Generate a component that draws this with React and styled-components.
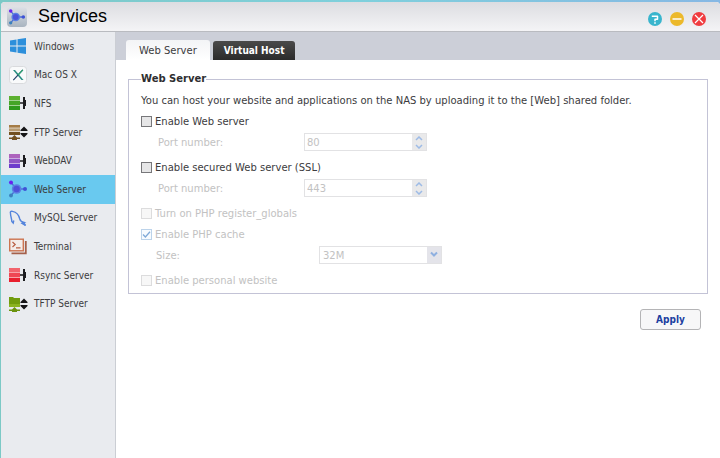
import React, { useState } from 'react'
import styled, { createGlobalStyle } from 'styled-components'

const colors = {
  text: '#3c3c3e',
  disabled: '#c2c2c2',
  border: '#c3c3d6',
  inputBorder: '#e2e2e4',
  sidebar: '#e9ebef',
  active: '#69c9ef',
  strip: '#cccfd8',
  action: '#1c3fa0',
}

const fonts = {
  main: "'DejaVu Sans', Verdana, sans-serif",
  narrow: "'DejaVu Sans Condensed', 'DejaVu Sans', Tahoma, sans-serif",
  title: "'Liberation Sans', Arial, sans-serif",
}

const GlobalStyle = createGlobalStyle`
  *, *::before, *::after {
    box-sizing: border-box;
  }
  body {
    margin: 0;
    background: #ffffff;
    color: ${colors.text};
    font-family: ${fonts.main};
    font-size: 10px;
  }
  button, input, select {
    font: inherit;
    color: inherit;
    margin: 0;
    padding: 0;
  }
`

const Frame = styled.div`
  min-height: 100vh;
  display: flex;
  padding: 2px 0 0 1px;
  background: linear-gradient(90deg, #7cc9c6, #7fd0dc 50%, #86b8e4);
`

const Window = styled.div`
  flex: 1;
  display: flex;
  flex-direction: column;
  background: #ffffff;
  border-radius: 4px 4px 0 0;
  overflow: hidden;
`

const Header = styled.header`
  display: flex;
  align-items: center;
  height: 30px;
  padding: 0 13px 0 6px;
  border-bottom: 1px solid #b9bbc0;
  background: linear-gradient(#dcdde1, #f4f4f6);
`

const HeaderIcon = styled.span`
  display: flex;
  align-items: center;
  justify-content: center;
  width: 20px;
  height: 20px;
  border-radius: 4px;
  background: linear-gradient(#dde0e6, #a9b4c0);
`

const Title = styled.h1`
  flex: 1;
  margin: 0 0 2px 11px;
  color: #000000;
  font-family: ${fonts.title};
  font-size: 18px;
  line-height: 24px;
  font-weight: 400;
`

const WindowControls = styled.div`
  display: flex;
  align-items: center;
  gap: 6px;
  padding-top: 4px;
`

const ControlButton = styled.button`
  display: flex;
  width: 16px;
  height: 16px;
  border: 0;
  background: none;
  cursor: pointer;
`

const Main = styled.div`
  flex: 1;
  display: flex;
`

const Sidebar = styled.nav`
  flex: 0 0 115px;
  border-right: 1px solid #cbced4;
  background: ${colors.sidebar};
`

const ServiceList = styled.ul`
  display: grid;
  grid-template-rows: repeat(10, 1fr);
  height: 286px;
  margin: 0;
  padding: 0;
  list-style: none;
`

const ServiceLink = styled.a`
  display: flex;
  align-items: center;
  gap: 6px;
  height: 100%;
  padding-left: 7px;
  color: ${colors.text};
  font-family: ${fonts.narrow};
  text-decoration: none;
  background: ${({ $active }) => ($active ? colors.active : 'transparent')};
`

const Content = styled.main`
  flex: 1;
  min-width: 0;
`

const Tabs = styled.div`
  display: flex;
  align-items: flex-end;
  gap: 3px;
  height: 28px;
  padding-left: 10px;
  background: ${colors.strip};
`

const Tab = styled.button`
  height: ${({ $active }) => ($active ? '20px' : '19px')};
  padding: ${({ $active }) => ($active ? '0 13px' : '0 11px')};
  border: 0;
  border-radius: 3px 3px 0 0;
  cursor: pointer;
  color: ${({ $active }) => ($active ? colors.text : '#ffffff')};
  font-family: ${({ $active }) => ($active ? fonts.main : fonts.narrow)};
  font-weight: ${({ $active }) => ($active ? 400 : 700)};
  background: ${({ $active }) =>
    $active
      ? 'linear-gradient(#f3f4f6, #ffffff)'
      : 'linear-gradient(#4a4a4a, #2b2b2b)'};
`

const Form = styled.form`
  padding: 12px;
`

const Section = styled.fieldset`
  margin: 0;
  padding: 5px 12px 3px;
  border: 1px solid ${colors.border};
`

const Legend = styled.legend`
  padding: 0;
  color: #2e2e30;
  font-weight: 700;
  line-height: 14px;
`

const Description = styled.p`
  margin: 0;
  line-height: 20px;
`

const Groups = styled.div`
  display: grid;
  gap: 5px;
`

const Group = styled.div`
  display: grid;
  gap: 1px;
`

const CheckLabel = styled.label`
  display: flex;
  align-items: center;
  gap: 3px;
  height: 20px;
  color: ${({ $disabled }) => ($disabled ? colors.disabled : colors.text)};
`

const Checkbox = styled.input`
  appearance: none;
  width: 11px;
  height: 11px;
  border: 1px solid #77777a;
  background: #e6e6e7;
  &:disabled {
    border-color: #dcdcdd;
    background: #f7f7f7;
  }
  &:disabled:checked {
    border-color: #bcd3ea;
    background: #f7fbff
      url("data:image/svg+xml,%3Csvg xmlns='http://www.w3.org/2000/svg' viewBox='0 0 9 9'%3E%3Cpath d='M1 4.5 3.4 7 8 1.8' fill='none' stroke='%237fa9d8' stroke-width='1.3'/%3E%3C/svg%3E");
  }
`

const Field = styled.div`
  display: flex;
  align-items: center;
  height: 20px;
  padding-left: ${({ $wide }) => ($wide ? '15px' : '17px')};
  color: ${colors.disabled};
  label {
    width: ${({ $wide }) => ($wide ? '163px' : '146px')};
  }
`

const Control = styled.div`
  display: flex;
  width: 123px;
  height: 18px;
  border: 1px solid ${colors.inputBorder};
  background: #ffffff;
`

const NumberInput = styled.input`
  flex: 1;
  min-width: 0;
  padding-left: 2px;
  border: 0;
  background: none;
`

const Stepper = styled.div`
  display: flex;
  flex-direction: column;
  width: 14px;
  background: #e9e9ea;
`

const StepButton = styled.button`
  flex: 1;
  display: flex;
  align-items: center;
  justify-content: center;
  border: 0;
  background: none;
`

const SelectBox = styled.select`
  appearance: none;
  width: 123px;
  height: 18px;
  padding-left: 3px;
  border: 1px solid ${colors.inputBorder};
  border-radius: 0;
  background:
    url("data:image/svg+xml,%3Csvg xmlns='http://www.w3.org/2000/svg' viewBox='0 0 14 16'%3E%3Cpath d='M4 5.5 7 8.5 10 5.5' fill='none' stroke='%238fb0e0' stroke-width='2'/%3E%3C/svg%3E")
      right center / 14px 16px no-repeat,
    linear-gradient(#e4e4ea, #e4e4ea) right center / 14px 16px no-repeat,
    #ffffff;
  &:disabled {
    color: ${colors.disabled};
    opacity: 1;
  }
`

const Actions = styled.div`
  display: flex;
  justify-content: flex-end;
  padding: 15px 7px 0 0;
`

const ApplyButton = styled.button`
  min-width: 61px;
  height: 21px;
  border: 1px solid #b4b4b6;
  border-radius: 3px;
  background: #f7f7f8;
  color: ${colors.action};
  font-family: ${fonts.narrow};
  font-weight: 700;
  cursor: pointer;
`

function WindowsIcon() {
  return (
    <svg width="20" height="20" viewBox="0 0 20 20" fill="#2d8fdb">
      <path d="M2 4.500 8.500 3.500v6H2zM9.500 3.300 18 2v7.500H9.500zM2 10.500h6.500v6L2 15.500zM9.500 10.500H18V18l-8.500-1.300z" />
    </svg>
  )
}

function MacIcon() {
  return (
    <svg width="20" height="20" viewBox="0 0 20 20">
      <rect x="1.5" y="1.5" width="17" height="17" rx="3" fill="#f9fafb" stroke="#d9dadd" />
      <path d="M5 5h2l8.5 10h-2z" fill="#278c82" />
      <path d="M14.800 4.800 5.300 15.200" stroke="#24436b" strokeWidth="1.2" />
      <path d="m10 10 4.800-5.200" stroke="#2ba66f" strokeWidth="1.2" />
    </svg>
  )
}

function ServerIcon({ tones }) {
  return (
    <svg width="20" height="20" viewBox="0 0 20 20">
      <rect x="1" y="3" width="11" height="14" fill={tones[1]} />
      <rect x="1" y="3" width="11" height="4" fill={tones[0]} />
      <rect x="1" y="13" width="11" height="4" fill={tones[2]} />
      <path d="M1 7.5h11M1 12.5h11" stroke="#ffffff" strokeOpacity="0.5" />
      <path d="M12 10h4" stroke="#1d1d20" strokeWidth="1.6" />
      <path d="M17.500 7v6" stroke="#1d1d20" />
      <path d="M16 4v12" stroke="#1d1d20" strokeWidth="2" />
    </svg>
  )
}

function TransferIcon({ tones, folder }) {
  return (
    <svg width="20" height="20" viewBox="0 0 20 20">
      {folder ? (
        <>
          <path d="M1 3h4l1 1h6v6H1z" fill={tones[0]} />
          <rect x="1" y="10" width="11" height="3" fill={tones[1]} />
        </>
      ) : (
        <>
          <rect x="1" y="3" width="11" height="3" fill={tones[0]} />
          <rect x="1" y="6" width="11" height="4" fill={tones[1]} />
          <rect x="1" y="10" width="11" height="3" fill={tones[2]} />
          <path d="M1 6h11M1 9.500h11" stroke="#ffffff" strokeOpacity="0.6" />
        </>
      )}
      <path d="M1 15.500h3l2.500-2.500L9 15.500h3V17H9v1H4v-1H1z" fill={tones[2]} />
      <path d="m16 4.500 3.500 3.500v1h-7V8zM12.500 11h7v1L16 15.500 12.500 12z" fill="#151517" />
    </svg>
  )
}

function HubIcon({ size = 20 }) {
  return (
    <svg width={size} height={size} viewBox="0 0 20 20">
      <path d="m3 3.5 5.5 6.5L3 16.5M9 10h8" fill="none" stroke="#4b6fd6" strokeWidth="1.4" />
      <circle cx="8.6" cy="10" r="4.8" fill="#5b80e2" />
      <circle cx="8.6" cy="10" r="3.2" fill="#4d52da" />
      <circle cx="3" cy="3.4" r="2" fill="#6a22ee" />
      <circle cx="3" cy="16.5" r="1.9" fill="#3b80bd" />
      <circle cx="17" cy="10" r="2" fill="#3f52d6" />
    </svg>
  )
}

function DolphinIcon() {
  return (
    <svg width="20" height="20" viewBox="0 0 20 20" fill="none" stroke="#5484dc" strokeWidth="1.4">
      <path d="M5.800 12.500 5.200 15 3.800 13.500C3.800 10.500 2.500 8.500 2.500 5.500 2 4 2.500 3 4.500 3.400c4 .8 6.500 4 7.300 7.600.5 2 1.700 3 4.200 3.500l-2 .8 3.500 2.200" />
      <path d="M15.500 14.500 17.500 17.500" />
    </svg>
  )
}

function TerminalIcon() {
  return (
    <svg width="20" height="20" viewBox="0 0 20 20">
      <path d="M3.5 17.300h14.300V5" fill="none" stroke="#a5604b" strokeWidth="1.8" />
      <rect x="1.7" y="3.2" width="13.6" height="11.6" fill="#f3ece9" stroke="#cc7450" strokeWidth="1.4" />
      <path d="m4.500 6 2.700 2.500L4.500 11M8 11.800h4.500" fill="none" stroke="#b95e42" strokeWidth="1.2" />
    </svg>
  )
}

const services = [
  { id: 'windows', name: 'Windows', icon: <WindowsIcon /> },
  { id: 'mac', name: 'Mac OS X', icon: <MacIcon /> },
  {
    id: 'nfs',
    name: 'NFS',
    icon: <ServerIcon tones={['#5cb030', '#45a526', '#2f9a1c']} />,
  },
  {
    id: 'ftp',
    name: 'FTP Server',
    icon: <TransferIcon tones={['#a47b46', '#b79a70', '#73501f']} />,
  },
  {
    id: 'webdav',
    name: 'WebDAV',
    icon: <ServerIcon tones={['#ad63bd', '#9056c4', '#6d3ccc']} />,
  },
  { id: 'web', name: 'Web Server', icon: <HubIcon /> },
  { id: 'mysql', name: 'MySQL Server', icon: <DolphinIcon /> },
  { id: 'terminal', name: 'Terminal', icon: <TerminalIcon /> },
  {
    id: 'rsync',
    name: 'Rsync Server',
    icon: <ServerIcon tones={['#f2646d', '#ef4653', '#e81f2e']} />,
  },
  {
    id: 'tftp',
    name: 'TFTP Server',
    icon: <TransferIcon folder tones={['#719c0e', '#8bb320', '#6a930e']} />,
  },
]

function CheckRow({ children, ...props }) {
  return (
    <CheckLabel $disabled={props.disabled}>
      <Checkbox type="checkbox" {...props} />
      {children}
    </CheckLabel>
  )
}

function PortField({ id, value }) {
  return (
    <Field>
      <label htmlFor={id}>Port number:</label>
      <Control>
        <NumberInput id={id} type="text" defaultValue={value} disabled />
        <Stepper>
          <StepButton type="button" aria-label="Increase" disabled>
            <svg width="8" height="5" viewBox="0 0 8 5">
              <path d="M1 4 4 1l3 3" fill="none" stroke="#9dbbe6" strokeWidth="1.5" />
            </svg>
          </StepButton>
          <StepButton type="button" aria-label="Decrease" disabled>
            <svg width="8" height="5" viewBox="0 0 8 5">
              <path d="m1 1 3 3 3-3" fill="none" stroke="#9dbbe6" strokeWidth="1.5" />
            </svg>
          </StepButton>
        </Stepper>
      </Control>
    </Field>
  )
}

function App() {
  const [service, setService] = useState('web')
  const [tab, setTab] = useState('server')

  return (
    <React.Fragment>
      <GlobalStyle />
      <Frame>
        <Window>
          <Header>
            <HeaderIcon>
              <HubIcon size={18} />
            </HeaderIcon>
            <Title>Services</Title>
            <WindowControls>
              <ControlButton type="button" aria-label="Help">
                <svg width="16" height="16" viewBox="0 0 16 16">
                  <circle cx="8" cy="8" r="7" fill="#39b5cd" />
                  <path d="M4.8 5.2h5.7v3H8v2" fill="none" stroke="#ffffff" strokeWidth="1.5" strokeLinejoin="round" />
                  <path d="M7.2 11.300h1.600v1.500H7.200z" fill="#ffffff" />
                </svg>
              </ControlButton>
              <ControlButton type="button" aria-label="Minimize">
                <svg width="16" height="16" viewBox="0 0 16 16">
                  <circle cx="8" cy="8" r="7" fill="#ecb92b" />
                  <path d="M3.5 8h9" stroke="#ffffff" strokeWidth="1.4" />
                </svg>
              </ControlButton>
              <ControlButton type="button" aria-label="Close">
                <svg width="16" height="16" viewBox="0 0 16 16">
                  <circle cx="8" cy="8" r="7" fill="#f03c40" />
                  <path d="m4 4 8 8M12 4l-8 8" stroke="#ffffff" strokeWidth="1.2" />
                </svg>
              </ControlButton>
            </WindowControls>
          </Header>
          <Main>
            <Sidebar>
              <ServiceList>
                {services.map(({ id, name, icon }) => (
                  <li key={id}>
                    <ServiceLink
                      href={`#${id}`}
                      $active={service === id}
                      onClick={() => setService(id)}
                    >
                      {icon}
                      {name}
                    </ServiceLink>
                  </li>
                ))}
              </ServiceList>
            </Sidebar>
            <Content>
              <Tabs role="tablist">
                <Tab
                  type="button"
                  role="tab"
                  aria-selected={tab === 'server'}
                  $active={tab === 'server'}
                  onClick={() => setTab('server')}
                >
                  Web Server
                </Tab>
                <Tab
                  type="button"
                  role="tab"
                  aria-selected={tab === 'host'}
                  $active={tab === 'host'}
                  onClick={() => setTab('host')}
                >
                  Virtual Host
                </Tab>
              </Tabs>
              <Form onSubmit={(e) => e.preventDefault()}>
                <Section>
                  <Legend>Web Server</Legend>
                  <Description>
                    You can host your website and applications on the NAS by
                    uploading it to the [Web] shared folder.
                  </Description>
                  <Groups>
                    <Group>
                      <CheckRow>Enable Web server</CheckRow>
                      <PortField id="port" value="80" />
                    </Group>
                    <Group>
                      <CheckRow>Enable secured Web server (SSL)</CheckRow>
                      <PortField id="ssl-port" value="443" />
                    </Group>
                    <Group>
                      <CheckRow disabled>Turn on PHP register_globals</CheckRow>
                      <CheckRow disabled defaultChecked>
                        Enable PHP cache
                      </CheckRow>
                      <Field $wide>
                        <label htmlFor="cache-size">Size:</label>
                        <SelectBox id="cache-size" defaultValue="32M" disabled>
                          <option>32M</option>
                        </SelectBox>
                      </Field>
                    </Group>
                    <Group>
                      <CheckRow disabled>Enable personal website</CheckRow>
                    </Group>
                  </Groups>
                </Section>
                <Actions>
                  <ApplyButton type="submit">Apply</ApplyButton>
                </Actions>
              </Form>
            </Content>
          </Main>
        </Window>
      </Frame>
    </React.Fragment>
  )
}

export default App
